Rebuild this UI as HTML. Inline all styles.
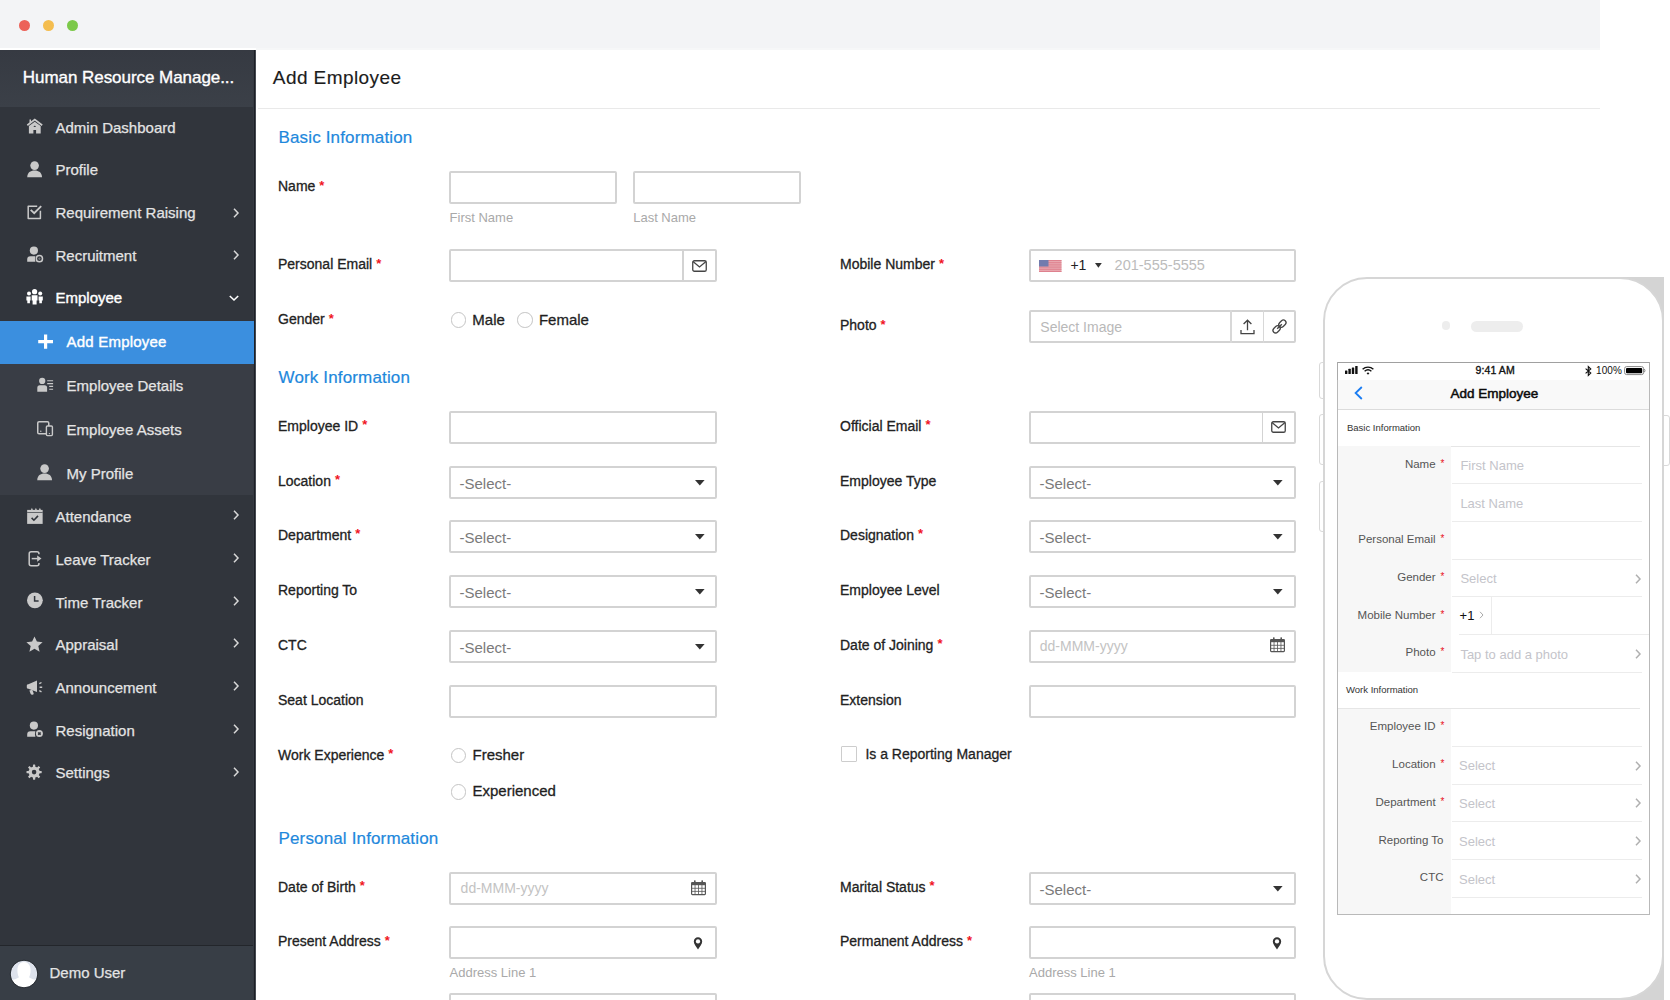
<!DOCTYPE html>
<html><head><meta charset="utf-8"><title>Add Employee</title>
<style>
html,body{margin:0;padding:0;}
body{width:1670px;height:1000px;overflow:hidden;position:relative;background:#ffffff;font-family:"Liberation Sans",sans-serif;}
.a{position:absolute;box-sizing:border-box;}
.t{position:absolute;white-space:nowrap;}
svg.a{overflow:visible;}
</style></head><body>

<div class="a" style="left:0px;top:0px;width:1600px;height:48px;background:#f3f4f6;"></div>
<div class="a" style="left:256px;top:48px;width:1344px;height:1.5px;background:#f6f7f8;"></div>
<div class="a" style="left:19.0px;top:19.5px;width:11px;height:11px;border-radius:50%;background:#ec6259;"></div>
<div class="a" style="left:43.0px;top:19.5px;width:11px;height:11px;border-radius:50%;background:#f4bd4f;"></div>
<div class="a" style="left:67.0px;top:19.5px;width:11px;height:11px;border-radius:50%;background:#7cc94a;"></div>
<div class="a" style="left:0px;top:50px;width:256px;height:950px;background:#31353c;"></div>
<div class="a" style="left:253px;top:50px;width:1px;height:950px;background:#363a42;"></div>
<div class="a" style="left:254px;top:50px;width:1px;height:950px;background:#1c1f26;"></div>
<div class="a" style="left:255px;top:50px;width:1px;height:950px;background:#464a51;"></div>
<div class="a" style="left:0px;top:50px;width:253px;height:57px;background:linear-gradient(#363a42,#3b4048);"></div>
<div class="t" style="left:22.8px;top:68.20px;font-size:17px;line-height:20.4px;color:#ffffff;-webkit-text-stroke:0.35px #fff;letter-spacing:-0.05px;">Human Resource Manage...</div>
<div class="a" style="left:0px;top:320.5px;width:253px;height:174.5px;background:#393d45;"></div>
<div class="a" style="left:0px;top:320.5px;width:254px;height:43.6px;background:#3b8fdf;"></div>
<svg class="a" style="left:26.8px;top:118.3px" width="16" height="16" viewBox="0 0 16 16"><path d="M0.3 7.2 L7.75 1.5 L15.2 7.2" fill="none" stroke="#c9c9c9" stroke-width="1.7"/><rect x="2.5" y="1.5" width="1.5" height="3.2" fill="#c9c9c9"/><path d="M1.9 7.9 L7.75 3.8 L13.7 7.9 V15.4 H9.1 V12.1 H6.4 V15.4 H1.9 Z" fill="#c9c9c9"/><ellipse cx="7.75" cy="8.3" rx="1.2" ry="0.65" fill="#30343b"/></svg>
<div class="t" style="left:55.5px;top:118.60px;font-size:15px;line-height:18.0px;color:#e4e4e4;-webkit-text-stroke:0.25px #e4e4e4;">Admin Dashboard</div>
<svg class="a" style="left:26.8px;top:160.6px" width="16" height="17" viewBox="0 0 16 17"><circle cx="7.6" cy="4.6" r="4.3" fill="#c9c9c9"/><path d="M0.2 16.2 C0.4 11.6 3.4 9.6 7.6 9.6 C11.8 9.6 14.8 11.6 15 16.2 Z" fill="#c9c9c9"/></svg>
<div class="t" style="left:55.5px;top:161.20px;font-size:15px;line-height:18.0px;color:#e4e4e4;-webkit-text-stroke:0.25px #e4e4e4;">Profile</div>
<svg class="a" style="left:26.8px;top:204.8px" width="16" height="15" viewBox="0 0 16 15"><path d="M10.2 1.2 H1.2 V13.4 H13.4 V5.8" fill="none" stroke="#c9c9c9" stroke-width="1.5" stroke-linejoin="round"/><path d="M3.7 4.9 L7.2 8.2 L14.2 1.2" fill="none" stroke="#c9c9c9" stroke-width="1.9"/></svg>
<div class="t" style="left:55.5px;top:203.80px;font-size:15px;line-height:18.0px;color:#e4e4e4;-webkit-text-stroke:0.25px #e4e4e4;">Requirement Raising</div>
<svg class="a" style="left:232px;top:207.70000000000002px" width="8" height="10" viewBox="0 0 8 10"><path d="M2 0.8 L6 5 L2 9.2" fill="none" stroke="#d8d8d8" stroke-width="1.5"/></svg>
<svg class="a" style="left:26.6px;top:246.0px" width="17" height="17" viewBox="0 0 17 17"><circle cx="6.9" cy="4.6" r="4.1" fill="#c9c9c9"/><path d="M0.2 15.8 V13.2 Q0.2 10.2 3.4 10.2 H8.4 Q7.4 13 8.4 15.8 Z" fill="#c9c9c9"/><circle cx="12.4" cy="12.7" r="3.1" fill="none" stroke="#c9c9c9" stroke-width="1.5"/><path d="M12.4 11.4v2.6M11.1 12.7h2.6" stroke="#c9c9c9" stroke-width="0.8" opacity="0.5"/></svg>
<div class="t" style="left:55.5px;top:246.60px;font-size:15px;line-height:18.0px;color:#e4e4e4;-webkit-text-stroke:0.25px #e4e4e4;">Recruitment</div>
<svg class="a" style="left:232px;top:250.4px" width="8" height="10" viewBox="0 0 8 10"><path d="M2 0.8 L6 5 L2 9.2" fill="none" stroke="#d8d8d8" stroke-width="1.5"/></svg>
<svg class="a" style="left:25.9px;top:288.8px" width="17" height="16" viewBox="0 0 17 16"><circle cx="8.6" cy="2.7" r="2.6" fill="#ffffff"/><path d="M5.7 6.2 H11.5 V11.4 H10.6 V15.6 H6.6 V11.4 H5.7 Z" fill="#ffffff"/><circle cx="3" cy="4.6" r="2" fill="#ffffff"/><path d="M0.4 7.4 H4.6 V11.6 H3.9 V14.2 H1.3 V11.6 H0.4 Z" fill="#ffffff"/><circle cx="14.2" cy="4.6" r="2" fill="#ffffff"/><path d="M12.6 7.4 H16.8 V11.6 H15.9 V14.2 H13.3 V11.6 H12.6 Z" fill="#ffffff"/></svg>
<div class="t" style="left:55.5px;top:289.20px;font-size:15px;line-height:18.0px;color:#ffffff;-webkit-text-stroke:0.4px #fff;">Employee</div>
<svg class="a" style="left:229.4px;top:293.65000000000003px" width="10" height="8" viewBox="0 0 10 8"><path d="M0.8 2 L5 6 L9.2 2" fill="none" stroke="#ffffff" stroke-width="1.6"/></svg>
<svg class="a" style="left:26.6px;top:508.1px" width="16" height="16" viewBox="0 0 16 16"><rect x="0.15" y="1.9" width="15.5" height="14" fill="#c9c9c9"/><path d="M3.90 2 L4.90 -0.2 L5.90 2 Z" fill="#c9c9c9"/><path d="M7.90 2 L8.90 -0.2 L9.90 2 Z" fill="#c9c9c9"/><path d="M11.90 2 L12.90 -0.2 L13.90 2 Z" fill="#c9c9c9"/><rect x="0.15" y="4.1" width="15.5" height="0.9" fill="#30343b" opacity="0.75"/><path d="M4.6 9.9 L6.9 12.2 L11 7.9" fill="none" stroke="#30343b" stroke-width="1.6"/></svg>
<div class="t" style="left:55.5px;top:508.30px;font-size:15px;line-height:18.0px;color:#e4e4e4;-webkit-text-stroke:0.25px #e4e4e4;">Attendance</div>
<svg class="a" style="left:232px;top:510.29999999999995px" width="8" height="10" viewBox="0 0 8 10"><path d="M2 0.8 L6 5 L2 9.2" fill="none" stroke="#d8d8d8" stroke-width="1.5"/></svg>
<svg class="a" style="left:27.8px;top:551.0px" width="15" height="16" viewBox="0 0 15 16"><path d="M10.95 3.3 V2.75 Q10.95 0.75 8.95 0.75 H3.2 Q1.2 0.75 1.2 2.75 V12.75 Q1.2 14.75 3.2 14.75 H8.95 Q10.95 14.75 10.95 12.75 V12" fill="none" stroke="#c9c9c9" stroke-width="1.5"/><path d="M3.7 7.6 H9.8" stroke="#c9c9c9" stroke-width="1.5"/><path d="M9.2 4.6 L13.5 7.6 L9.2 10.8 Z" fill="#c9c9c9"/></svg>
<div class="t" style="left:55.5px;top:551.00px;font-size:15px;line-height:18.0px;color:#e4e4e4;-webkit-text-stroke:0.25px #e4e4e4;">Leave Tracker</div>
<svg class="a" style="left:232px;top:553.0px" width="8" height="10" viewBox="0 0 8 10"><path d="M2 0.8 L6 5 L2 9.2" fill="none" stroke="#d8d8d8" stroke-width="1.5"/></svg>
<svg class="a" style="left:26.6px;top:592.3px" width="16" height="17" viewBox="0 0 16 17"><circle cx="7.9" cy="8.35" r="7.9" fill="#c9c9c9"/><path d="M7.6 4 V9 H11.6" fill="none" stroke="#30343b" stroke-width="1.5"/></svg>
<div class="t" style="left:55.5px;top:593.60px;font-size:15px;line-height:18.0px;color:#e4e4e4;-webkit-text-stroke:0.25px #e4e4e4;">Time Tracker</div>
<svg class="a" style="left:232px;top:595.6999999999999px" width="8" height="10" viewBox="0 0 8 10"><path d="M2 0.8 L6 5 L2 9.2" fill="none" stroke="#d8d8d8" stroke-width="1.5"/></svg>
<svg class="a" style="left:26.2px;top:636.3000000000001px" width="17" height="17" viewBox="0 0 17 17"><path d="M8.5 0.4 L10.9 5.6 L16.6 6.2 L12.3 10 L13.6 15.8 L8.5 12.8 L3.4 15.8 L4.7 10 L0.4 6.2 L6.1 5.6 Z" fill="#c9c9c9"/></svg>
<div class="t" style="left:55.5px;top:636.30px;font-size:15px;line-height:18.0px;color:#e4e4e4;-webkit-text-stroke:0.25px #e4e4e4;">Appraisal</div>
<svg class="a" style="left:232px;top:638.4px" width="8" height="10" viewBox="0 0 8 10"><path d="M2 0.8 L6 5 L2 9.2" fill="none" stroke="#d8d8d8" stroke-width="1.5"/></svg>
<svg class="a" style="left:26.0px;top:679.5px" width="17" height="16" viewBox="0 0 17 16"><path d="M0.8 5.6 Q0.8 4.2 2.4 4.2 L11 0.5 V12 L2.4 8.8 Q0.8 8.8 0.8 7.4 Z" fill="#c9c9c9"/><path d="M3.4 10.4 L6.3 9.8 L7.7 13.5 Q7.6 14.9 6.1 14.8 Q5 14.7 4.6 13.7 Z" fill="#c9c9c9"/><path d="M13.3 3.7 L15.5 2.5 M13.6 7.2 H16.2 M13.3 10.6 L15.5 11.8" stroke="#c9c9c9" stroke-width="1.4"/></svg>
<div class="t" style="left:55.5px;top:678.90px;font-size:15px;line-height:18.0px;color:#e4e4e4;-webkit-text-stroke:0.25px #e4e4e4;">Announcement</div>
<svg class="a" style="left:232px;top:681.0999999999999px" width="8" height="10" viewBox="0 0 8 10"><path d="M2 0.8 L6 5 L2 9.2" fill="none" stroke="#d8d8d8" stroke-width="1.5"/></svg>
<svg class="a" style="left:26.6px;top:721.15px" width="17" height="17" viewBox="0 0 17 17"><circle cx="6.9" cy="4.6" r="4.1" fill="#c9c9c9"/><path d="M0.2 15.8 V13.2 Q0.2 10.2 3.4 10.2 H8.4 Q7.4 13 8.4 15.8 Z" fill="#c9c9c9"/><circle cx="12.4" cy="12.6" r="3.5" fill="#c9c9c9"/><path d="M11.2 11.4l2.4 2.4M13.6 11.4l-2.4 2.4" stroke="#30343b" stroke-width="1.4"/></svg>
<div class="t" style="left:55.5px;top:721.60px;font-size:15px;line-height:18.0px;color:#e4e4e4;-webkit-text-stroke:0.25px #e4e4e4;">Resignation</div>
<svg class="a" style="left:232px;top:723.8px" width="8" height="10" viewBox="0 0 8 10"><path d="M2 0.8 L6 5 L2 9.2" fill="none" stroke="#d8d8d8" stroke-width="1.5"/></svg>
<svg class="a" style="left:26.4px;top:763.9000000000001px" width="17" height="17" viewBox="0 0 17 17"><rect x="6.95" y="0.5" width="2.3" height="4" rx="0.4" fill="#c9c9c9" transform="rotate(0 8.1 8.1)"/><rect x="6.95" y="0.5" width="2.3" height="4" rx="0.4" fill="#c9c9c9" transform="rotate(45 8.1 8.1)"/><rect x="6.95" y="0.5" width="2.3" height="4" rx="0.4" fill="#c9c9c9" transform="rotate(90 8.1 8.1)"/><rect x="6.95" y="0.5" width="2.3" height="4" rx="0.4" fill="#c9c9c9" transform="rotate(135 8.1 8.1)"/><rect x="6.95" y="0.5" width="2.3" height="4" rx="0.4" fill="#c9c9c9" transform="rotate(180 8.1 8.1)"/><rect x="6.95" y="0.5" width="2.3" height="4" rx="0.4" fill="#c9c9c9" transform="rotate(225 8.1 8.1)"/><rect x="6.95" y="0.5" width="2.3" height="4" rx="0.4" fill="#c9c9c9" transform="rotate(270 8.1 8.1)"/><rect x="6.95" y="0.5" width="2.3" height="4" rx="0.4" fill="#c9c9c9" transform="rotate(315 8.1 8.1)"/><circle cx="8.1" cy="8.1" r="5.6" fill="#c9c9c9"/><circle cx="8.1" cy="8.1" r="2.3" fill="#30343b"/></svg>
<div class="t" style="left:55.5px;top:764.30px;font-size:15px;line-height:18.0px;color:#e4e4e4;-webkit-text-stroke:0.25px #e4e4e4;">Settings</div>
<svg class="a" style="left:232px;top:766.5px" width="8" height="10" viewBox="0 0 8 10"><path d="M2 0.8 L6 5 L2 9.2" fill="none" stroke="#d8d8d8" stroke-width="1.5"/></svg>
<svg class="a" style="left:38.0px;top:333.6px" width="16" height="16" viewBox="0 0 16 16"><path d="M7.6 0.4V14.8M0.2 7.6H15" stroke="#ffffff" stroke-width="3.2"/></svg>
<div class="t" style="left:66.6px;top:333.30px;font-size:15px;line-height:18.0px;color:#ffffff;-webkit-text-stroke:0.4px #fff;letter-spacing:0.2px;">Add Employee</div>
<svg class="a" style="left:37.4px;top:377.70000000000005px" width="17" height="15" viewBox="0 0 17 15"><circle cx="5.2" cy="2.9" r="3.1" fill="#c9c9c9"/><path d="M0.3 13.7 V9.8 Q0.3 7.3 2.8 7.3 H7.6 Q10.1 7.3 10.1 9.8 V13.7 Z" fill="#c9c9c9"/><path d="M10.2 2.8h5.9M10.2 5.6h5.9M12.2 8.4h3.9M12.2 11.2h3.9" stroke="#c9c9c9" stroke-width="1.1"/></svg>
<div class="t" style="left:66.6px;top:377.00px;font-size:15px;line-height:18.0px;color:#e4e4e4;-webkit-text-stroke:0.25px #e4e4e4;">Employee Details</div>
<svg class="a" style="left:37.4px;top:421.0px" width="16" height="15" viewBox="0 0 16 15"><rect x="0.75" y="0.75" width="11" height="12" rx="1.3" fill="none" stroke="#c9c9c9" stroke-width="1.5"/><rect x="9.4" y="5" width="6" height="9.6" rx="1" fill="#393d45" stroke="#c9c9c9" stroke-width="1.4"/><circle cx="12.4" cy="12.6" r="0.7" fill="#c9c9c9"/><circle cx="3.8" cy="10.2" r="0.7" fill="#c9c9c9"/></svg>
<div class="t" style="left:66.6px;top:420.70px;font-size:15px;line-height:18.0px;color:#e4e4e4;-webkit-text-stroke:0.25px #e4e4e4;">Employee Assets</div>
<svg class="a" style="left:37.4px;top:463.90000000000003px" width="16" height="17" viewBox="0 0 16 17"><circle cx="7.6" cy="4.6" r="4.3" fill="#c9c9c9"/><path d="M0.2 16.2 C0.4 11.6 3.4 9.6 7.6 9.6 C11.8 9.6 14.8 11.6 15 16.2 Z" fill="#c9c9c9"/></svg>
<div class="t" style="left:66.6px;top:464.50px;font-size:15px;line-height:18.0px;color:#e4e4e4;-webkit-text-stroke:0.25px #e4e4e4;">My Profile</div>
<div class="a" style="left:0px;top:945px;width:253px;height:1px;background:#23262b;"></div>
<div class="a" style="left:0px;top:946px;width:253px;height:54px;background:#383e46;"></div>
<svg class="a" style="left:10.4px;top:959.8px" width="28" height="28" viewBox="0 0 28 28"><defs><clipPath id="avc"><circle cx="14" cy="14" r="13.2"/></clipPath></defs><circle cx="14" cy="14" r="13.4" fill="#dde2ec"/><g clip-path="url(#avc)"><path d="M7.4 10.2 C7.4 5 10.2 2 14 2 C17.8 2 20.6 5 20.6 10.2 C20.6 13.2 20 15.6 19 17.2 C21 18.8 24.4 19.8 28 20.2 V28 H0 V20.2 C3.6 19.8 7 18.8 9 17.2 C8 15.6 7.4 13.2 7.4 10.2 Z" fill="#ffffff"/></g><circle cx="14" cy="14" r="13.8" fill="none" stroke="#23272d" stroke-width="0.9"/></svg>
<div class="t" style="left:49.5px;top:964.40px;font-size:15px;line-height:18.0px;color:#e4e4e4;-webkit-text-stroke:0.25px #e4e4e4;">Demo User</div>
<div class="t" style="left:272.8px;top:66.91px;font-size:19px;line-height:22.8px;color:#1c1c1c;letter-spacing:0.42px;-webkit-text-stroke:0.15px #1c1c1c;">Add Employee</div>
<div class="a" style="left:258px;top:108px;width:1342px;height:1px;background:#e9e9e9;"></div>
<div class="t" style="left:278.5px;top:127.50px;font-size:17px;line-height:20.4px;color:#1e88dc;letter-spacing:0.15px;-webkit-text-stroke:0.2px #1e88dc;">Basic Information</div>
<div class="t" style="left:278.5px;top:367.50px;font-size:17px;line-height:20.4px;color:#1e88dc;letter-spacing:0.15px;-webkit-text-stroke:0.2px #1e88dc;">Work Information</div>
<div class="t" style="left:278.5px;top:828.90px;font-size:17px;line-height:20.4px;color:#1e88dc;letter-spacing:0.15px;-webkit-text-stroke:0.2px #1e88dc;">Personal Information</div>
<div class="t" style="left:278px;top:178.04px;font-size:14px;line-height:16.8px;color:#222222;-webkit-text-stroke:0.3px #222;">Name<span style="color:#f0141e;font-size:13px;margin-left:4px;font-weight:700;-webkit-text-stroke:0;position:relative;top:-1.5px;">*</span></div>
<div class="a" style="left:449px;top:171px;width:168px;height:33px;border:2px solid #d3d3d3;border-radius:2px;background:#fff;"></div>
<div class="a" style="left:633px;top:171px;width:168px;height:33px;border:2px solid #d3d3d3;border-radius:2px;background:#fff;"></div>
<div class="t" style="left:449.6px;top:210.39px;font-size:13px;line-height:15.6px;color:#a9a9a9;">First Name</div>
<div class="t" style="left:633.2px;top:210.39px;font-size:13px;line-height:15.6px;color:#a9a9a9;">Last Name</div>
<div class="t" style="left:278px;top:256.04px;font-size:14px;line-height:16.8px;color:#222222;-webkit-text-stroke:0.3px #222;">Personal Email<span style="color:#f0141e;font-size:13px;margin-left:4px;font-weight:700;-webkit-text-stroke:0;position:relative;top:-1.5px;">*</span></div>
<div class="a" style="left:449px;top:249px;width:268px;height:33px;border:2px solid #d3d3d3;border-radius:2px;background:#fff;"></div>
<div class="a" style="left:682px;top:249px;width:1.5px;height:33px;background:#d3d3d3;"></div>
<svg class="a" style="left:691.8px;top:259.8px" width="15" height="12" viewBox="0 0 15 12"><rect x="0.75" y="0.75" width="13.5" height="10.5" rx="1.6" fill="none" stroke="#444" stroke-width="1.3"/><path d="M1 1.6 L7.5 7 L14 1.6" fill="none" stroke="#444" stroke-width="1.3"/></svg>
<div class="t" style="left:840px;top:256.04px;font-size:14px;line-height:16.8px;color:#222222;-webkit-text-stroke:0.3px #222;">Mobile Number<span style="color:#f0141e;font-size:13px;margin-left:4px;font-weight:700;-webkit-text-stroke:0;position:relative;top:-1.5px;">*</span></div>
<div class="a" style="left:1029px;top:249px;width:267px;height:33px;border:2px solid #d3d3d3;border-radius:2px;background:#fff;"></div>
<svg class="a" style="left:1038.8px;top:260px" width="23" height="12" viewBox="0 0 23 12"><g opacity="0.85"><rect x="0" y="0" width="22.5" height="12" fill="#e7a0a8"/><rect x="0" y="0.00" width="22.5" height="0.92" fill="#d86878"/><rect x="0" y="1.85" width="22.5" height="0.92" fill="#d86878"/><rect x="0" y="3.69" width="22.5" height="0.92" fill="#d86878"/><rect x="0" y="5.54" width="22.5" height="0.92" fill="#d86878"/><rect x="0" y="7.38" width="22.5" height="0.92" fill="#d86878"/><rect x="0" y="9.23" width="22.5" height="0.92" fill="#d86878"/><rect x="0" y="11.08" width="22.5" height="0.92" fill="#d86878"/><rect x="0" y="0" width="9.5" height="6.5" fill="#5a64a0"/></g></svg>
<div class="t" style="left:1070.4px;top:257.44px;font-size:14px;line-height:16.8px;color:#222;">+1</div>
<svg class="a" style="left:1094.6px;top:262.6px" width="7" height="5" viewBox="0 0 7 5"><path d="M0 0 H6.8 L3.4 4.8 Z" fill="#333"/></svg>
<div class="t" style="left:1114.6px;top:256.97px;font-size:14.5px;line-height:17.4px;color:#bcbcbc;">201-555-5555</div>
<div class="t" style="left:278px;top:311.04px;font-size:14px;line-height:16.8px;color:#222222;-webkit-text-stroke:0.3px #222;">Gender<span style="color:#f0141e;font-size:13px;margin-left:4px;font-weight:700;-webkit-text-stroke:0;position:relative;top:-1.5px;">*</span></div>
<div class="a" style="left:450.55px;top:312.25px;width:15.5px;height:15.5px;border:1.5px solid #c4c4c4;border-radius:50%;background:#fff;"></div>
<div class="t" style="left:472.3px;top:310.80px;font-size:15px;line-height:18.0px;color:#1f1f1f;-webkit-text-stroke:0.3px #1f1f1f;">Male</div>
<div class="a" style="left:517.25px;top:312.35px;width:15.5px;height:15.5px;border:1.5px solid #c4c4c4;border-radius:50%;background:#fff;"></div>
<div class="t" style="left:538.9px;top:310.80px;font-size:15px;line-height:18.0px;color:#1f1f1f;-webkit-text-stroke:0.3px #1f1f1f;">Female</div>
<div class="t" style="left:840px;top:317.44px;font-size:14px;line-height:16.8px;color:#222222;-webkit-text-stroke:0.3px #222;">Photo<span style="color:#f0141e;font-size:13px;margin-left:4px;font-weight:700;-webkit-text-stroke:0;position:relative;top:-1.5px;">*</span></div>
<div class="a" style="left:1029px;top:310px;width:267px;height:33px;border:2px solid #d3d3d3;border-radius:2px;background:#fff;"></div>
<div class="a" style="left:1230px;top:310px;width:1.5px;height:33px;background:#d8d8d8;"></div>
<div class="a" style="left:1262.5px;top:310px;width:1.5px;height:33px;background:#d8d8d8;"></div>
<div class="t" style="left:1040.3px;top:318.74px;font-size:14px;line-height:16.8px;color:#b9b9b9;">Select Image</div>
<svg class="a" style="left:1239.5px;top:318.5px" width="15" height="16" viewBox="0 0 15 16"><path d="M7.5 1.2 V11.2 M3.6 5 L7.5 1.2 L11.4 5" fill="none" stroke="#444" stroke-width="1.3"/><path d="M1 11 V14.6 H14 V11" fill="none" stroke="#444" stroke-width="1.3"/></svg>
<svg class="a" style="left:1271.5px;top:319px" width="15" height="15" viewBox="0 0 15 15"><g transform="rotate(-45 7.5 7.5)"><rect x="-0.6" y="4.9" width="8" height="5.2" rx="2.6" fill="none" stroke="#444" stroke-width="1.3"/><rect x="7.6" y="4.9" width="8" height="5.2" rx="2.6" fill="none" stroke="#444" stroke-width="1.3"/><path d="M4.2 7.5 H10.8" stroke="#444" stroke-width="1.3"/></g></svg>
<div class="t" style="left:278px;top:417.54px;font-size:14px;line-height:16.8px;color:#222222;-webkit-text-stroke:0.3px #222;">Employee ID<span style="color:#f0141e;font-size:13px;margin-left:4px;font-weight:700;-webkit-text-stroke:0;position:relative;top:-1.5px;">*</span></div>
<div class="a" style="left:449px;top:411px;width:268px;height:33px;border:2px solid #d3d3d3;border-radius:2px;background:#fff;"></div>
<div class="t" style="left:278px;top:472.54px;font-size:14px;line-height:16.8px;color:#222222;-webkit-text-stroke:0.3px #222;">Location<span style="color:#f0141e;font-size:13px;margin-left:4px;font-weight:700;-webkit-text-stroke:0;position:relative;top:-1.5px;">*</span></div>
<div class="a" style="left:449px;top:466px;width:268px;height:33px;border:2px solid #d3d3d3;border-radius:2px;background:#fff;"></div>
<div class="t" style="left:459.5px;top:474.60px;font-size:15px;line-height:18.0px;color:#7a7a7a;">-Select-</div>
<svg class="a" style="left:694.5px;top:480px" width="10" height="6" viewBox="0 0 10 6"><path d="M0 0 H9.6 L4.8 5.6 Z" fill="#333"/></svg>
<div class="t" style="left:278px;top:526.54px;font-size:14px;line-height:16.8px;color:#222222;-webkit-text-stroke:0.3px #222;">Department<span style="color:#f0141e;font-size:13px;margin-left:4px;font-weight:700;-webkit-text-stroke:0;position:relative;top:-1.5px;">*</span></div>
<div class="a" style="left:449px;top:520px;width:268px;height:33px;border:2px solid #d3d3d3;border-radius:2px;background:#fff;"></div>
<div class="t" style="left:459.5px;top:528.60px;font-size:15px;line-height:18.0px;color:#7a7a7a;">-Select-</div>
<svg class="a" style="left:694.5px;top:534px" width="10" height="6" viewBox="0 0 10 6"><path d="M0 0 H9.6 L4.8 5.6 Z" fill="#333"/></svg>
<div class="t" style="left:278px;top:581.54px;font-size:14px;line-height:16.8px;color:#222222;-webkit-text-stroke:0.3px #222;">Reporting To</div>
<div class="a" style="left:449px;top:575px;width:268px;height:33px;border:2px solid #d3d3d3;border-radius:2px;background:#fff;"></div>
<div class="t" style="left:459.5px;top:583.60px;font-size:15px;line-height:18.0px;color:#7a7a7a;">-Select-</div>
<svg class="a" style="left:694.5px;top:589px" width="10" height="6" viewBox="0 0 10 6"><path d="M0 0 H9.6 L4.8 5.6 Z" fill="#333"/></svg>
<div class="t" style="left:278px;top:636.54px;font-size:14px;line-height:16.8px;color:#222222;-webkit-text-stroke:0.3px #222;">CTC</div>
<div class="a" style="left:449px;top:630px;width:268px;height:33px;border:2px solid #d3d3d3;border-radius:2px;background:#fff;"></div>
<div class="t" style="left:459.5px;top:638.60px;font-size:15px;line-height:18.0px;color:#7a7a7a;">-Select-</div>
<svg class="a" style="left:694.5px;top:644px" width="10" height="6" viewBox="0 0 10 6"><path d="M0 0 H9.6 L4.8 5.6 Z" fill="#333"/></svg>
<div class="t" style="left:278px;top:691.54px;font-size:14px;line-height:16.8px;color:#222222;-webkit-text-stroke:0.3px #222;">Seat Location</div>
<div class="a" style="left:449px;top:685px;width:268px;height:33px;border:2px solid #d3d3d3;border-radius:2px;background:#fff;"></div>
<div class="t" style="left:840px;top:417.54px;font-size:14px;line-height:16.8px;color:#222222;-webkit-text-stroke:0.3px #222;">Official Email<span style="color:#f0141e;font-size:13px;margin-left:4px;font-weight:700;-webkit-text-stroke:0;position:relative;top:-1.5px;">*</span></div>
<div class="a" style="left:1029px;top:411px;width:267px;height:33px;border:2px solid #d3d3d3;border-radius:2px;background:#fff;"></div>
<div class="a" style="left:1261.5px;top:411px;width:1.5px;height:33px;background:#d3d3d3;"></div>
<svg class="a" style="left:1271.1px;top:421.3px" width="15" height="12" viewBox="0 0 15 12"><rect x="0.75" y="0.75" width="13.5" height="10.5" rx="1.6" fill="none" stroke="#444" stroke-width="1.3"/><path d="M1 1.6 L7.5 7 L14 1.6" fill="none" stroke="#444" stroke-width="1.3"/></svg>
<div class="t" style="left:840px;top:472.54px;font-size:14px;line-height:16.8px;color:#222222;-webkit-text-stroke:0.3px #222;">Employee Type</div>
<div class="a" style="left:1029px;top:466px;width:267px;height:33px;border:2px solid #d3d3d3;border-radius:2px;background:#fff;"></div>
<div class="t" style="left:1039.5px;top:474.60px;font-size:15px;line-height:18.0px;color:#7a7a7a;">-Select-</div>
<svg class="a" style="left:1273.3px;top:480px" width="10" height="6" viewBox="0 0 10 6"><path d="M0 0 H9.6 L4.8 5.6 Z" fill="#333"/></svg>
<div class="t" style="left:840px;top:526.54px;font-size:14px;line-height:16.8px;color:#222222;-webkit-text-stroke:0.3px #222;">Designation<span style="color:#f0141e;font-size:13px;margin-left:4px;font-weight:700;-webkit-text-stroke:0;position:relative;top:-1.5px;">*</span></div>
<div class="a" style="left:1029px;top:520px;width:267px;height:33px;border:2px solid #d3d3d3;border-radius:2px;background:#fff;"></div>
<div class="t" style="left:1039.5px;top:528.60px;font-size:15px;line-height:18.0px;color:#7a7a7a;">-Select-</div>
<svg class="a" style="left:1273.3px;top:534px" width="10" height="6" viewBox="0 0 10 6"><path d="M0 0 H9.6 L4.8 5.6 Z" fill="#333"/></svg>
<div class="t" style="left:840px;top:581.54px;font-size:14px;line-height:16.8px;color:#222222;-webkit-text-stroke:0.3px #222;">Employee Level</div>
<div class="a" style="left:1029px;top:575px;width:267px;height:33px;border:2px solid #d3d3d3;border-radius:2px;background:#fff;"></div>
<div class="t" style="left:1039.5px;top:583.60px;font-size:15px;line-height:18.0px;color:#7a7a7a;">-Select-</div>
<svg class="a" style="left:1273.3px;top:589px" width="10" height="6" viewBox="0 0 10 6"><path d="M0 0 H9.6 L4.8 5.6 Z" fill="#333"/></svg>
<div class="t" style="left:840px;top:636.54px;font-size:14px;line-height:16.8px;color:#222222;-webkit-text-stroke:0.3px #222;">Date of Joining<span style="color:#f0141e;font-size:13px;margin-left:4px;font-weight:700;-webkit-text-stroke:0;position:relative;top:-1.5px;">*</span></div>
<div class="a" style="left:1029px;top:630px;width:267px;height:33px;border:2px solid #d3d3d3;border-radius:2px;background:#fff;"></div>
<div class="t" style="left:1039.8px;top:637.94px;font-size:14px;line-height:16.8px;color:#c3c3c3;">dd-MMM-yyyy</div>
<svg class="a" style="left:1270px;top:637.4px" width="15" height="15" viewBox="0 0 15 15"><rect x="0.6" y="2.6" width="13.8" height="12" rx="0.8" fill="none" stroke="#555" stroke-width="1.2"/><rect x="0.6" y="2.6" width="13.8" height="2.6" fill="#555"/><rect x="3" y="0.2" width="1.6" height="3.6" rx="0.6" fill="#555"/><rect x="10.4" y="0.2" width="1.6" height="3.6" rx="0.6" fill="#555"/><path d="M4.05 5 V14.6" stroke="#555" stroke-width="0.8"/><path d="M7.50 5 V14.6" stroke="#555" stroke-width="0.8"/><path d="M10.95 5 V14.6" stroke="#555" stroke-width="0.8"/><path d="M0.6 8.30 H14.4" stroke="#555" stroke-width="0.8"/><path d="M0.6 11.40 H14.4" stroke="#555" stroke-width="0.8"/></svg>
<div class="t" style="left:840px;top:691.54px;font-size:14px;line-height:16.8px;color:#222222;-webkit-text-stroke:0.3px #222;">Extension</div>
<div class="a" style="left:1029px;top:685px;width:267px;height:33px;border:2px solid #d3d3d3;border-radius:2px;background:#fff;"></div>
<div class="t" style="left:278px;top:746.54px;font-size:14px;line-height:16.8px;color:#222222;-webkit-text-stroke:0.3px #222;">Work Experience<span style="color:#f0141e;font-size:13px;margin-left:4px;font-weight:700;-webkit-text-stroke:0;position:relative;top:-1.5px;">*</span></div>
<div class="a" style="left:450.55px;top:747.95px;width:15.5px;height:15.5px;border:1.5px solid #c4c4c4;border-radius:50%;background:#fff;"></div>
<div class="t" style="left:472.5px;top:746.10px;font-size:15px;line-height:18.0px;color:#1f1f1f;-webkit-text-stroke:0.3px #1f1f1f;">Fresher</div>
<div class="a" style="left:450.55px;top:784.15px;width:15.5px;height:15.5px;border:1.5px solid #c4c4c4;border-radius:50%;background:#fff;"></div>
<div class="t" style="left:472.5px;top:782.20px;font-size:15px;line-height:18.0px;color:#1f1f1f;-webkit-text-stroke:0.3px #1f1f1f;">Experienced</div>
<div class="a" style="left:841px;top:746px;width:15.5px;height:15.5px;border:1.5px solid #cdcdcd;border-radius:1px;background:#fff;"></div>
<div class="t" style="left:865.4px;top:745.54px;font-size:14px;line-height:16.8px;color:#1f1f1f;-webkit-text-stroke:0.3px #1f1f1f;">Is a Reporting Manager</div>
<div class="t" style="left:278px;top:878.84px;font-size:14px;line-height:16.8px;color:#222222;-webkit-text-stroke:0.3px #222;">Date of Birth<span style="color:#f0141e;font-size:13px;margin-left:4px;font-weight:700;-webkit-text-stroke:0;position:relative;top:-1.5px;">*</span></div>
<div class="a" style="left:449px;top:872px;width:268px;height:33px;border:2px solid #d3d3d3;border-radius:2px;background:#fff;"></div>
<div class="t" style="left:460.6px;top:880.24px;font-size:14px;line-height:16.8px;color:#c3c3c3;">dd-MMM-yyyy</div>
<svg class="a" style="left:690.5px;top:879.5px" width="15" height="15" viewBox="0 0 15 15"><rect x="0.6" y="2.6" width="13.8" height="12" rx="0.8" fill="none" stroke="#555" stroke-width="1.2"/><rect x="0.6" y="2.6" width="13.8" height="2.6" fill="#555"/><rect x="3" y="0.2" width="1.6" height="3.6" rx="0.6" fill="#555"/><rect x="10.4" y="0.2" width="1.6" height="3.6" rx="0.6" fill="#555"/><path d="M4.05 5 V14.6" stroke="#555" stroke-width="0.8"/><path d="M7.50 5 V14.6" stroke="#555" stroke-width="0.8"/><path d="M10.95 5 V14.6" stroke="#555" stroke-width="0.8"/><path d="M0.6 8.30 H14.4" stroke="#555" stroke-width="0.8"/><path d="M0.6 11.40 H14.4" stroke="#555" stroke-width="0.8"/></svg>
<div class="t" style="left:840px;top:878.84px;font-size:14px;line-height:16.8px;color:#222222;-webkit-text-stroke:0.3px #222;">Marital Status<span style="color:#f0141e;font-size:13px;margin-left:4px;font-weight:700;-webkit-text-stroke:0;position:relative;top:-1.5px;">*</span></div>
<div class="a" style="left:1029px;top:872px;width:267px;height:33px;border:2px solid #d3d3d3;border-radius:2px;background:#fff;"></div>
<div class="t" style="left:1039.5px;top:880.60px;font-size:15px;line-height:18.0px;color:#7a7a7a;">-Select-</div>
<svg class="a" style="left:1273.3px;top:886px" width="10" height="6" viewBox="0 0 10 6"><path d="M0 0 H9.6 L4.8 5.6 Z" fill="#333"/></svg>
<div class="t" style="left:278px;top:933.44px;font-size:14px;line-height:16.8px;color:#222222;-webkit-text-stroke:0.3px #222;">Present Address<span style="color:#f0141e;font-size:13px;margin-left:4px;font-weight:700;-webkit-text-stroke:0;position:relative;top:-1.5px;">*</span></div>
<div class="a" style="left:449px;top:926px;width:268px;height:33px;border:2px solid #d3d3d3;border-radius:2px;background:#fff;"></div>
<svg class="a" style="left:693.0px;top:937px" width="10" height="13" viewBox="0 0 10 13"><path d="M5 12.4 C3.4 9.4 0.8 7.4 0.8 4.4 C0.8 2 2.7 0.2 5 0.2 C7.3 0.2 9.2 2 9.2 4.4 C9.2 7.4 6.6 9.4 5 12.4 Z" fill="#333"/><circle cx="5" cy="4.45" r="2.15" fill="#fff"/></svg>
<div class="t" style="left:449.5px;top:965.29px;font-size:13px;line-height:15.6px;color:#a9a9a9;">Address Line 1</div>
<div class="a" style="left:449px;top:993px;width:268px;height:33px;border:2px solid #d3d3d3;border-radius:2px;background:#fff;"></div>
<div class="t" style="left:840px;top:933.44px;font-size:14px;line-height:16.8px;color:#222222;-webkit-text-stroke:0.3px #222;">Permanent Address<span style="color:#f0141e;font-size:13px;margin-left:4px;font-weight:700;-webkit-text-stroke:0;position:relative;top:-1.5px;">*</span></div>
<div class="a" style="left:1029px;top:926px;width:267px;height:33px;border:2px solid #d3d3d3;border-radius:2px;background:#fff;"></div>
<svg class="a" style="left:1272.0px;top:937px" width="10" height="13" viewBox="0 0 10 13"><path d="M5 12.4 C3.4 9.4 0.8 7.4 0.8 4.4 C0.8 2 2.7 0.2 5 0.2 C7.3 0.2 9.2 2 9.2 4.4 C9.2 7.4 6.6 9.4 5 12.4 Z" fill="#333"/><circle cx="5" cy="4.45" r="2.15" fill="#fff"/></svg>
<div class="t" style="left:1029px;top:965.29px;font-size:13px;line-height:15.6px;color:#a9a9a9;">Address Line 1</div>
<div class="a" style="left:1029px;top:993px;width:267px;height:33px;border:2px solid #d3d3d3;border-radius:2px;background:#fff;"></div>
<div class="a" style="left:1600px;top:277px;width:64px;height:723px;background:#d4d4d4;"></div>
<div class="a" style="left:1318.5px;top:362px;width:8px;height:37px;border:1px solid #d9d9d9;border-radius:3px;background:#fff;"></div>
<div class="a" style="left:1318.5px;top:414px;width:8px;height:51px;border:1px solid #d9d9d9;border-radius:3px;background:#fff;"></div>
<div class="a" style="left:1318.5px;top:481px;width:8px;height:51px;border:1px solid #d9d9d9;border-radius:3px;background:#fff;"></div>
<div class="a" style="left:1660px;top:415px;width:10px;height:51px;border:1px solid #d9d9d9;border-radius:3px;background:#fff;"></div>
<div class="a" style="left:1323px;top:277px;width:341px;height:722.5px;border:2px solid #d6d6d6;border-radius:44px;background:#fff;"></div>
<div class="a" style="left:1441.5px;top:321.4px;width:8.6px;height:8.6px;border-radius:50%;background:#ededed;"></div>
<div class="a" style="left:1470.8px;top:320.5px;width:51.8px;height:11.2px;border-radius:6px;background:#ededed;"></div>
<div class="a" style="left:1337px;top:362px;width:313px;height:553px;border:1px solid #b9b9b9;background:#fff;"></div>
<div class="a" style="left:1337px;top:362px;width:313px;height:1px;background:#a0a0a0;"></div>
<div class="a" style="left:1337px;top:362px;width:1px;height:18px;background:#a9a9a9;"></div>
<div class="a" style="left:1649px;top:362px;width:1px;height:18px;background:#a9a9a9;"></div>
<div class="a" style="left:1338px;top:380px;width:311px;height:29.5px;background:#f9f9f9;"></div>
<div class="a" style="left:1338px;top:409.2px;width:311px;height:1px;background:#dcdcdc;"></div>
<svg class="a" style="left:1345px;top:366px" width="14" height="8" viewBox="0 0 14 8"><rect x="0.0" y="4.4" width="2.4" height="3.6" rx="0.5" fill="#111"/><rect x="3.4" y="2.8" width="2.4" height="5.2" rx="0.5" fill="#111"/><rect x="6.8" y="1.4" width="2.4" height="6.6" rx="0.5" fill="#111"/><rect x="10.2" y="0.0" width="2.4" height="8.0" rx="0.5" fill="#111"/></svg>
<svg class="a" style="left:1362px;top:365.5px" width="12" height="9" viewBox="0 0 12 9"><path d="M0.6 3.2 A8 8 0 0 1 11.4 3.2" fill="none" stroke="#111" stroke-width="1.4"/><path d="M2.6 5.3 A5.2 5.2 0 0 1 9.4 5.3" fill="none" stroke="#111" stroke-width="1.4"/><path d="M4.6 7.2 L6 8.8 L7.4 7.2 A2.2 2.2 0 0 0 4.6 7.2Z" fill="#111"/></svg>
<div class="t" style="left:1475.6px;top:364.16px;font-size:10.5px;line-height:12.6px;color:#111;letter-spacing:0.1px;-webkit-text-stroke:0.35px #111;">9:41 AM</div>
<svg class="a" style="left:1585px;top:365.8px" width="7" height="10" viewBox="0 0 7 10"><path d="M0.6 2.6 L5.8 7 L3.3 9.4 V0.6 L5.8 3 L0.6 7.4" fill="none" stroke="#111" stroke-width="1.1"/></svg>
<div class="t" style="left:1596px;top:364.93px;font-size:10px;line-height:12.0px;color:#111;letter-spacing:0.1px;">100%</div>
<svg class="a" style="left:1623.5px;top:365.8px" width="22" height="9" viewBox="0 0 22 9"><rect x="0.6" y="0.6" width="19" height="8" rx="2" fill="none" stroke="#888" stroke-width="1"/><rect x="2" y="2" width="16.2" height="5.2" rx="1" fill="#000"/><path d="M20.4 3 Q21.6 4.6 20.4 6.2" fill="none" stroke="#888" stroke-width="1"/></svg>
<svg class="a" style="left:1354px;top:385.5px" width="9" height="14" viewBox="0 0 9 14"><path d="M7.8 1 L1.6 7 L7.8 13" fill="none" stroke="#1a7cf2" stroke-width="1.8"/></svg>
<div class="t" style="left:1294.3px;width:400px;text-align:center;top:385.82px;font-size:13.5px;line-height:16.2px;color:#0b0b0b;-webkit-text-stroke:0.5px #0b0b0b;">Add Employee</div>
<div class="t" style="left:1347px;top:421.91px;font-size:9.5px;line-height:11.4px;color:#333;">Basic Information</div>
<div class="a" style="left:1338px;top:445.5px;width:302px;height:1px;background:#e6e6e6;"></div>
<div class="a" style="left:1338px;top:446px;width:113px;height:225.8px;background:#f7f7f7;"></div>
<div class="a" style="left:1338px;top:708px;width:113px;height:206px;background:#f7f7f7;"></div>
<div class="a" style="left:1452px;top:483.4px;width:190px;height:1px;background:#ececec;"></div>
<div class="a" style="left:1452px;top:521.2px;width:190px;height:1px;background:#ececec;"></div>
<div class="a" style="left:1452px;top:559.0px;width:190px;height:1px;background:#ececec;"></div>
<div class="a" style="left:1452px;top:596.4px;width:190px;height:1px;background:#ececec;"></div>
<div class="a" style="left:1452px;top:671.8px;width:190px;height:1px;background:#ececec;"></div>
<div class="a" style="left:1459px;top:633.7px;width:190px;height:1px;background:#ececec;"></div>
<div class="a" style="left:1491px;top:596.9px;width:1px;height:37px;background:#ececec;"></div>
<div class="a" style="left:1452px;top:745.8px;width:190px;height:1px;background:#ececec;"></div>
<div class="a" style="left:1452px;top:783.5px;width:190px;height:1px;background:#ececec;"></div>
<div class="a" style="left:1452px;top:821.2px;width:190px;height:1px;background:#ececec;"></div>
<div class="a" style="left:1452px;top:859.4px;width:190px;height:1px;background:#ececec;"></div>
<div class="a" style="left:1452px;top:897.0px;width:190px;height:1px;background:#ececec;"></div>
<div class="a" style="left:1338px;top:707.6px;width:302px;height:1px;background:#e6e6e6;"></div>
<div class="t" style="right:225.5px;top:457.71px;font-size:11.5px;line-height:13.8px;color:#555;text-align:right;">Name<span style="color:#e8121b;font-size:10px;margin-left:5px;position:relative;top:-1px;">*</span></div>
<div class="t" style="left:1460.4px;top:458.09px;font-size:13px;line-height:15.6px;color:#c4c4ca;">First Name</div>
<div class="t" style="left:1460.4px;top:495.89px;font-size:13px;line-height:15.6px;color:#c4c4ca;">Last Name</div>
<div class="t" style="right:225.5px;top:532.91px;font-size:11.5px;line-height:13.8px;color:#555;text-align:right;">Personal Email<span style="color:#e8121b;font-size:10px;margin-left:5px;position:relative;top:-1px;">*</span></div>
<div class="t" style="right:225.5px;top:570.91px;font-size:11.5px;line-height:13.8px;color:#555;text-align:right;">Gender<span style="color:#e8121b;font-size:10px;margin-left:5px;position:relative;top:-1px;">*</span></div>
<div class="t" style="left:1460.4px;top:571.29px;font-size:13px;line-height:15.6px;color:#c4c4ca;">Select</div>
<svg class="a" style="left:1633.5px;top:573.6px" width="8" height="10" viewBox="0 0 8 10"><path d="M2 0.8 L6 5 L2 9.2" fill="none" stroke="#b0b0b0" stroke-width="1.5"/></svg>
<div class="t" style="right:225.5px;top:608.91px;font-size:11.5px;line-height:13.8px;color:#555;text-align:right;">Mobile Number<span style="color:#e8121b;font-size:10px;margin-left:5px;position:relative;top:-1px;">*</span></div>
<div class="t" style="left:1459.6px;top:607.99px;font-size:13px;line-height:15.6px;color:#111;">+1</div>
<svg class="a" style="left:1478.5px;top:611px" width="5" height="8" viewBox="0 0 5 8"><path d="M1 0.8 L4 4 L1 7.2" fill="none" stroke="#aaa" stroke-width="1"/></svg>
<div class="t" style="right:225.5px;top:646.41px;font-size:11.5px;line-height:13.8px;color:#555;text-align:right;">Photo<span style="color:#e8121b;font-size:10px;margin-left:5px;position:relative;top:-1px;">*</span></div>
<div class="t" style="left:1460.4px;top:646.99px;font-size:13px;line-height:15.6px;color:#c4c4ca;">Tap to add a photo</div>
<svg class="a" style="left:1633.5px;top:649.0px" width="8" height="10" viewBox="0 0 8 10"><path d="M2 0.8 L6 5 L2 9.2" fill="none" stroke="#b0b0b0" stroke-width="1.5"/></svg>
<div class="t" style="left:1346px;top:684.21px;font-size:9.5px;line-height:11.4px;color:#333;">Work Information</div>
<div class="t" style="right:225.5px;top:720.41px;font-size:11.5px;line-height:13.8px;color:#555;text-align:right;">Employee ID<span style="color:#e8121b;font-size:10px;margin-left:5px;position:relative;top:-1px;">*</span></div>
<div class="t" style="right:225.5px;top:758.11px;font-size:11.5px;line-height:13.8px;color:#555;text-align:right;">Location<span style="color:#e8121b;font-size:10px;margin-left:5px;position:relative;top:-1px;">*</span></div>
<div class="t" style="left:1459px;top:758.49px;font-size:13px;line-height:15.6px;color:#c4c4ca;">Select</div>
<svg class="a" style="left:1633.5px;top:760.5px" width="8" height="10" viewBox="0 0 8 10"><path d="M2 0.8 L6 5 L2 9.2" fill="none" stroke="#b0b0b0" stroke-width="1.5"/></svg>
<div class="t" style="right:225.5px;top:795.91px;font-size:11.5px;line-height:13.8px;color:#555;text-align:right;">Department<span style="color:#e8121b;font-size:10px;margin-left:5px;position:relative;top:-1px;">*</span></div>
<div class="t" style="left:1459px;top:796.29px;font-size:13px;line-height:15.6px;color:#c4c4ca;">Select</div>
<svg class="a" style="left:1633.5px;top:798.3px" width="8" height="10" viewBox="0 0 8 10"><path d="M2 0.8 L6 5 L2 9.2" fill="none" stroke="#b0b0b0" stroke-width="1.5"/></svg>
<div class="t" style="right:226.5px;top:833.71px;font-size:11.5px;line-height:13.8px;color:#555;text-align:right;">Reporting To</div>
<div class="t" style="left:1459px;top:834.09px;font-size:13px;line-height:15.6px;color:#c4c4ca;">Select</div>
<svg class="a" style="left:1633.5px;top:836.0px" width="8" height="10" viewBox="0 0 8 10"><path d="M2 0.8 L6 5 L2 9.2" fill="none" stroke="#b0b0b0" stroke-width="1.5"/></svg>
<div class="t" style="right:226.5px;top:871.41px;font-size:11.5px;line-height:13.8px;color:#555;text-align:right;">CTC</div>
<div class="t" style="left:1459px;top:871.89px;font-size:13px;line-height:15.6px;color:#c4c4ca;">Select</div>
<svg class="a" style="left:1633.5px;top:873.8px" width="8" height="10" viewBox="0 0 8 10"><path d="M2 0.8 L6 5 L2 9.2" fill="none" stroke="#b0b0b0" stroke-width="1.5"/></svg>
</body></html>
